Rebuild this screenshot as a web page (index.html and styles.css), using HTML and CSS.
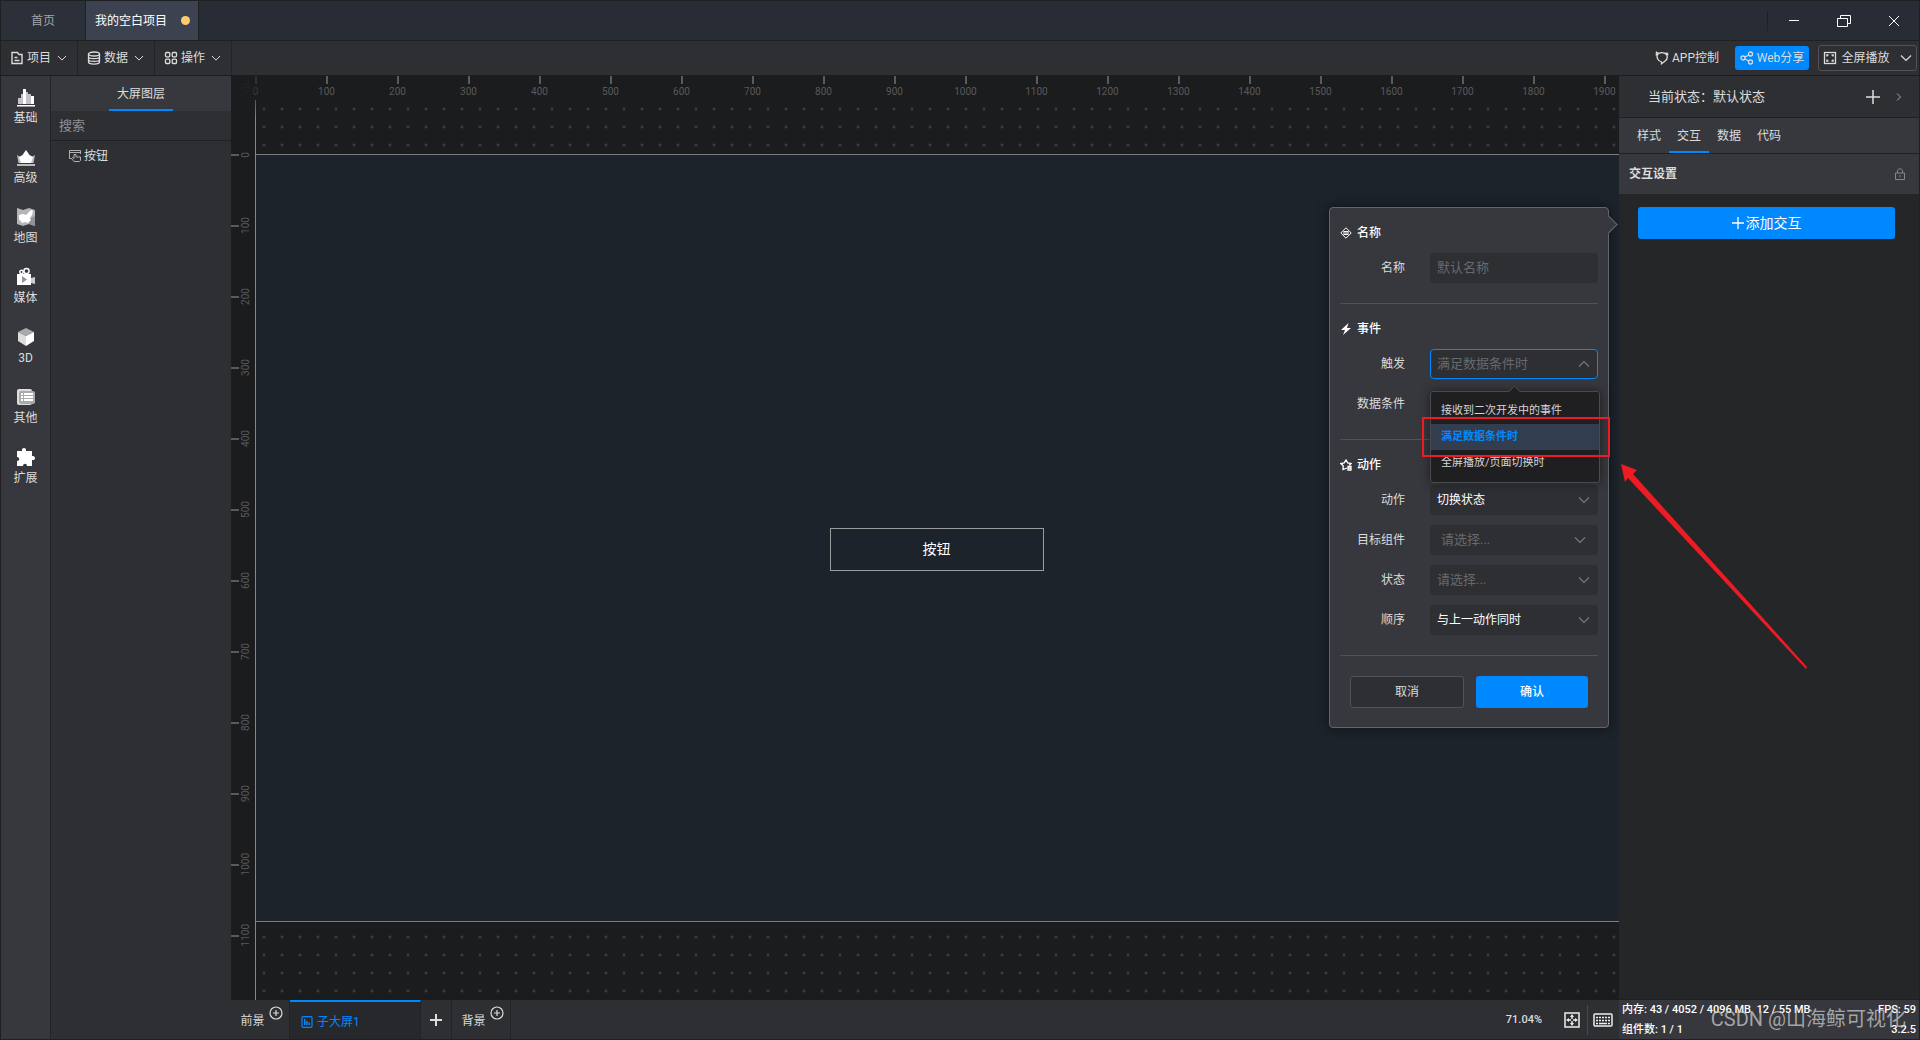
FILE: index.html
```html
<!DOCTYPE html>
<html lang="zh-CN">
<head>
<meta charset="utf-8">
<title>我的空白项目</title>
<link rel="stylesheet" href="styles.css">
</head>
<body>
<svg class="defs" aria-hidden="true">
  <symbol id="down" viewBox="0 0 12 8"><path d="M1 1.500 6 6.500 11 1.500" fill="none" stroke="currentColor" stroke-width="1.200"/></symbol>
  <symbol id="up" viewBox="0 0 12 8"><path d="M1 6.500 6 1.500 11 6.500" fill="none" stroke="currentColor" stroke-width="1.200"/></symbol>
  <symbol id="circle-plus" viewBox="0 0 14 14"><circle cx="7" cy="7" r="6" fill="none" stroke="currentColor" stroke-width="1.200"/><path d="M7 4v6M4 7h6" stroke="currentColor" stroke-width="1.200"/></symbol>
</svg>
<div class="app">
  <header class="titlebar">
    <nav class="project-tabs">
      <a class="project-tab" href="#home">首页</a>
      <a class="project-tab project-tab--active" href="#project">我的空白项目<span class="unsaved"></span></a>
    </nav>
    <div class="window-controls">
      <button aria-label="最小化"><svg width="14" height="14" viewBox="0 0 14 14"><path d="M2 6.500h10" stroke="#fff"/></svg></button>
      <button aria-label="还原"><svg width="16" height="14" viewBox="0 0 16 14" fill="none" stroke="#fff"><path d="M1.500 4.500h10v8h-10zM4.500 4.500v-3h10v8h-3"/></svg></button>
      <button aria-label="关闭"><svg width="12" height="12" viewBox="0 0 12 12"><path d="m1 1 10 10M11 1 1 11" stroke="#fff"/></svg></button>
    </div>
  </header>

  <div class="menubar">
    <nav class="menus">
      <button class="menu"><svg width="14" height="14" viewBox="0 0 14 14" fill="none" stroke="currentColor" stroke-width="1.400"><path d="M2 1.500h5.500l1.500 2h3v9H2zM4.500 6.500h3M4.500 9.500h5"/></svg>项目<svg class="menu-arrow" width="10" height="8"><use href="#down"/></svg></button>
      <button class="menu"><svg width="14" height="14" viewBox="0 0 14 14" fill="none" stroke="currentColor" stroke-width="1.300"><ellipse cx="7" cy="3" rx="5.500" ry="2"/><path d="M1.500 3v8c0 2.700 11 2.700 11 0V3M1.500 5.700c0 2.500 11 2.500 11 0M1.500 8.400c0 2.500 11 2.500 11 0"/></svg>数据<svg class="menu-arrow" width="10" height="8"><use href="#down"/></svg></button>
      <button class="menu"><svg width="14" height="14" viewBox="0 0 14 14" fill="none" stroke="currentColor" stroke-width="1.300"><rect x="1.500" y="1.500" width="4.300" height="4.300" rx="1"/><rect x="8.200" y="1.500" width="4.300" height="4.300" rx="1"/><rect x="1.500" y="8.200" width="4.300" height="4.300" rx="1"/><rect x="8.200" y="8.200" width="4.300" height="4.300" rx="1"/></svg>操作<svg class="menu-arrow" width="10" height="8"><use href="#down"/></svg></button>
    </nav>
    <div class="actions">
      <button class="app-control"><svg width="14" height="14" viewBox="0 0 14 14" fill="none" stroke="currentColor" stroke-width="1.300"><path d="M2.500 3.500C4.500 1 9 .8 11.500 3.500c1.500 3 .5 5.500-2 7L6.500 12.800V11C3 10 1.200 6.500 2.500 3.500zM4 2.500 1.500 1.300 1.200 4.500M10.500 2.200l2 .2.300 2"/></svg>APP控制</button>
      <button class="web-share"><svg width="14" height="14" viewBox="0 0 14 14" fill="none" stroke="currentColor" stroke-width="1.300"><circle cx="3" cy="7" r="2"/><circle cx="10.500" cy="3" r="2"/><circle cx="10.500" cy="11" r="2"/><path d="m5 6 3.700-2M5 8l3.700 2"/></svg>Web分享</button>
      <button class="fullscreen"><svg width="14" height="14" viewBox="0 0 14 14" fill="none" stroke="currentColor"><rect x="1.500" y="1.500" width="11" height="11" stroke-width="1.300"/><path d="M4 5.500V4h1.500M8.500 4H10v1.500M10 8.500V10H8.500M5.500 10H4V8.500" stroke-width="1.500"/></svg>全屏播放<svg class="fullscreen-arrow" width="12" height="8"><use href="#down"/></svg></button>
    </div>
  </div>

  <main class="workspace">
    <nav class="rail">
      <a class="rail-item" href="#basic"><svg width="20" height="20" viewBox="0 0 20 20" fill="#fff"><path d="M1 18h18v1.500H1zM7 2h3v15H7zM15 9h3v8h-3z"/><path fill="#c4c4c6" d="M2 11h3v6H2zM5 7h2v10H5zM10 5h2v12h-2zM12 7h3v10h-3z"/></svg>基础</a>
      <a class="rail-item" href="#advanced"><svg width="20" height="20" viewBox="0 0 20 20"><path fill="#bbb" d="M1 8l5 3 8 0 5-3-1.500 8h-15zM1 17h18v2H1z"/><path fill="#fff" d="m10 3 3.500 5L17 10l-2 6H5L3 10l3.500-2z"/></svg>高级</a>
      <a class="rail-item" href="#map"><svg width="20" height="20" viewBox="0 0 20 20"><path fill="#b5b5b7" d="m1 1 6 2 6-2 6 2v16l-6-2-6 2-6-2z"/><path fill="#939396" d="m13 12 6-3v10l-6-2z"/><path fill="#fff" d="M3 8l4-1 3 1 5-5 2 1-1 4-2 3 1 2-3 3-3-1-3 1-3-4z"/></svg>地图</a>
      <a class="rail-item" href="#media"><svg width="20" height="20" viewBox="0 0 20 20"><g fill="none" stroke="#fff" stroke-width="1.500"><circle cx="5.500" cy="5" r="1.700"/><circle cx="10.500" cy="4" r="2.600"/></g><path fill="#fff" d="M1 7h14v11H1z"/><path fill="#ccc" d="m15 11 4-1v7l-4-1z"/><path fill="#949496" d="m6 9 5 3.500L6 16z"/></svg>媒体</a>
      <a class="rail-item" href="#3d"><svg width="20" height="20" viewBox="0 0 20 20"><path fill="#aaaaac" d="m10 1 8 4-8 4-8-4z"/><path fill="#ddd" d="m2 5 8 4v10l-8-5z"/><path fill="#fff" d="m18 5-8 4v10l8-5z"/></svg>3D</a>
      <a class="rail-item" href="#other"><svg width="20" height="20" viewBox="0 0 20 20"><rect x="1" y="2" width="15" height="16" rx="2" fill="#ddd"/><rect x="3" y="4" width="16" height="13" rx="2" fill="#aaa"/><path fill="#fff" d="M5 6h2v2H5zM8 6h9v2H8zM5 9h2v2H5zM8 9h9v2H8zM5 12h2v2H5zM8 12h9v2H8z"/></svg>其他</a>
      <a class="rail-item" href="#extend"><svg width="20" height="20" viewBox="0 0 20 20"><path fill="#fff" d="M1 4h5c-1-4 5-4 4 0h6v5c4-1 4 5 0 4v6h-5c0-3-4-3-4 0H1v-5c3 0 3-4 0-4z"/></svg>扩展</a>
    </nav>

    <aside class="layers">
      <div class="layers-head"><h2 class="layers-title">大屏图层</h2></div>
      <input class="layers-search" type="search" placeholder="搜索" aria-label="搜索">
      <ul class="layers-list">
        <li><svg width="14" height="14" viewBox="0 0 14 14" fill="none" stroke="#b0b1b3"><path d="M3.500 9.500h-2v-8h11v3.500M1.500 3.500h11M6 9.500V5.500h2V8h4.500v3.500l-1 1H6L3.500 9.500l1-1L6 9.500"/></svg>按钮</li>
      </ul>
    </aside>

    <section class="center">
      <div class="canvas">
        <div class="ruler-x"><span>0</span><span>100</span><span>200</span><span>300</span><span>400</span><span>500</span><span>600</span><span>700</span><span>800</span><span>900</span><span>1000</span><span>1100</span><span>1200</span><span>1300</span><span>1400</span><span>1500</span><span>1600</span><span>1700</span><span>1800</span><span>1900</span></div>
        <div class="ruler-y"><span><b>-100</b></span><span><b>0</b></span><span><b>100</b></span><span><b>200</b></span><span><b>300</b></span><span><b>400</b></span><span><b>500</b></span><span><b>600</b></span><span><b>700</b></span><span><b>800</b></span><span><b>900</b></span><span><b>1000</b></span><span><b>1100</b></span></div>
        <div class="stage">
          <div class="artboard"><button class="widget">按钮</button></div>
        </div>
        <div class="corner"></div>
      </div>
      <footer class="pages">
        <button class="page">前景<svg class="page-add" width="14" height="14"><use href="#circle-plus"/></svg></button>
        <button class="page page--active"><svg width="12" height="12" viewBox="0 0 12 12"><rect x="1" y=".7" width="10" height="10.600" rx="1" fill="none" stroke="currentColor" stroke-width="1.200"/><path d="M3 3h1.500v6H3zM5.200 5h1.500v4H5.200zM7.500 6.500H9V9H7.500z" fill="currentColor"/></svg>子大屏1</button>
        <button class="page page--new" aria-label="新增"><svg width="12" height="12" viewBox="0 0 12 12"><path d="M6 0v12M0 6h12" stroke="#ddd" stroke-width="2"/></svg></button>
        <button class="page">背景<svg class="page-add" width="14" height="14"><use href="#circle-plus"/></svg></button>
        <div class="zoom">
          <span class="zoom-value">71.04%</span>
          <button aria-label="适应窗口"><svg width="16" height="16" viewBox="0 0 16 16"><rect x="1" y="1" width="14" height="14" fill="none" stroke="#eee" stroke-width="1.500"/><path fill="#eee" d="m8 2 2 3H8.700v2H7.300V5H6zM8 14l2-3H8.700V9H7.300v2H6zM2 8l3-2v1.300h2v1.400H5V10zM14 8l-3-2v1.300H9v1.400h2V10z"/></svg></button>
          <button class="keyboard" aria-label="快捷键"><svg width="20" height="14" viewBox="0 0 20 14"><rect x="1" y="1" width="18" height="12" rx="1" fill="none" stroke="#eee" stroke-width="1.500"/><path d="M3 4.500h14M3 7.500h14" stroke="#eee" stroke-width="1.600" stroke-dasharray="2 1"/><path d="M3 10.500h2M6 10.500h8M15 10.500h2" stroke="#eee" stroke-width="1.600"/></svg></button>
        </div>
      </footer>

      <form class="dialog">
        <fieldset class="group">
          <legend class="group-title"><svg width="12" height="12" viewBox="0 0 12 12" fill="none" stroke="currentColor"><path d="m6 .8 5.200 5.200L6 11.200.8 6zM3.500 4.500h5M3 6h6M3.500 7.500h5"/></svg>名称</legend>
          <div class="field"><label for="name">名称</label><div class="control"><input id="name" type="text" placeholder="默认名称"></div></div>
        </fieldset>
        <fieldset class="group">
          <legend class="group-title"><svg width="12" height="12" viewBox="0 0 12 12" fill="currentColor"><path d="M8.500 0 1 7h4L3 12l8-7H7z"/></svg>事件</legend>
          <div class="field"><label for="trigger">触发</label><div class="control control--open"><select id="trigger" class="muted"><option>满足数据条件时</option></select><svg class="caret" width="12" height="8"><use href="#up"/></svg>
            <ul class="options">
              <li>接收到二次开发中的事件</li>
              <li class="option--selected">满足数据条件时</li>
              <li>全屏播放/页面切换时</li>
            </ul></div></div>
          <div class="field"><span class="field-name">数据条件</span></div>
        </fieldset>
        <fieldset class="group">
          <legend class="group-title"><svg width="12" height="12" viewBox="0 0 12 12" fill="none" stroke="currentColor" stroke-width="1.300"><path d="M7 9 3 10.500l.2-3.700L.8 4.500l3.400-.7L6 1l1.700 2.800 3.500.7-2 2"/><path d="M8 7.500h3v3.500H8zM8 9.200h3"/></svg>动作</legend>
          <div class="field"><label for="action">动作</label><div class="control"><select id="action"><option>切换状态</option></select><svg class="caret" width="12" height="8"><use href="#down"/></svg></div></div>
          <div class="field"><label for="target">目标组件</label><div class="control control--inset"><select id="target" class="muted"><option>请选择...</option></select><svg class="caret" width="12" height="8"><use href="#down"/></svg></div></div>
          <div class="field"><label for="state">状态</label><div class="control"><select id="state" class="muted"><option>请选择...</option></select><svg class="caret" width="12" height="8"><use href="#down"/></svg></div></div>
          <div class="field"><label for="order">顺序</label><div class="control"><select id="order"><option>与上一动作同时</option></select><svg class="caret" width="12" height="8"><use href="#down"/></svg></div></div>
        </fieldset>
        <div class="dialog-actions"><button type="button" class="cancel">取消</button><button type="button" class="confirm">确认</button></div>
      </form>
    </section>

    <aside class="inspector">
      <div class="state-bar"><span>当前状态：默认状态</span>
        <button aria-label="添加状态"><svg width="14" height="14" viewBox="0 0 14 14"><path d="M7 0v14M0 7h14" stroke="#ddd" stroke-width="1.500"/></svg></button>
        <button aria-label="展开"><svg width="6" height="8" viewBox="0 0 6 8"><path d="m1 .5 3.500 3.500L1 7.500" fill="none" stroke="#aaa"/></svg></button>
      </div>
      <nav class="tabs"><a href="#style">样式</a><a class="tab--active" href="#interact">交互</a><a href="#data">数据</a><a href="#code">代码</a></nav>
      <div class="section-head"><h2>交互设置</h2><svg width="12" height="12" viewBox="0 0 12 12" fill="none" stroke="#858588"><path d="M1.500 5h9v6.500h-9zM3.500 5V3c0-3 5-3 5 0v2M6 7.200v2"/></svg></div>
      <div class="inspector-body"><button class="add"><svg width="12" height="12" viewBox="0 0 12 12"><path d="M6 0v12M0 6h12" stroke="#fff" stroke-width="1.300"/></svg>添加交互</button></div>
      <footer class="stats">
        <p><span>内存: 43 / 4052 / 4096 MB&nbsp; 12 / 55 MB</span><span>FPS: 59</span></p>
        <p><span>组件数: 1 / 1</span><span>3.2.5</span></p>
        <span class="watermark">CSDN @山海鲸可视化</span>
      </footer>
    </aside>

    <svg class="annotation" width="392" height="256" viewBox="0 0 392 256" aria-hidden="true">
      <rect x="5" y="2" width="186" height="38" fill="none" stroke="#ed1c24" stroke-width="2"/>
      <path fill="#ed1c24" d="m203 48 16 6-4 4 174 193-1 2L210 62l-3 4z"/>
    </svg>
  </main>
</div>
</body>
</html>
```
FILE: styles.css
```css
* { box-sizing: border-box; }
body { margin: 0; background: #1f2022; color: #dcdcdc; font: 12px/16px Roboto, "Noto Sans CJK SC", sans-serif; }
button { display: flex; align-items: center; justify-content: center; margin: 0; padding: 0; border: 0; background: none; color: inherit; font: inherit; white-space: nowrap; }
input, select { font: inherit; color: inherit; }
a { color: inherit; text-decoration: none; }
h2, p, ul { margin: 0; padding: 0; font-size: 12px; font-weight: 400; list-style: none; }
svg { flex: none; }
.defs { position: absolute; width: 0; height: 0; }
.app { display: flex; flex-direction: column; height: 100vh; padding: 1px; }

/* title bar */
.titlebar { display: flex; justify-content: space-between; height: 40px; background: #282c34; border-bottom: 1px solid #1f2022; }
.project-tabs { display: flex; }
.project-tab { display: flex; align-items: center; justify-content: center; width: 85px; background: #2c3038; color: #a2a4a8; border-right: 1px solid #1f2022; }
.project-tab--active { width: 113px; justify-content: flex-start; gap: 14px; padding-left: 9px; background: #3d4250; color: #fff; }
.unsaved { width: 9px; height: 9px; border-radius: 50%; background: #ffcb6b; }
.window-controls { display: flex; align-self: center; height: 20px; border-left: 1px solid #1f2022; }
.window-controls button { width: 50px; }
.window-controls button:first-child { margin-left: 1px; }

/* menu bar */
.menubar { display: flex; justify-content: space-between; height: 35px; background: #2e2f33; border-bottom: 1px solid #1c1d1f; }
.menus { display: flex; }
.menu { gap: 3px; width: 77px; padding-right: 1px; border-right: 1px solid #222326; }
.menu-arrow { margin-left: 3px; }
.actions { display: flex; align-items: center; padding-right: 2px; }
.app-control { gap: 3px; margin-right: 16px; }
.web-share { gap: 3px; width: 74px; height: 24px; margin-right: 9px; border-radius: 3px; background: #0089ff; }
.fullscreen { gap: 4px; width: 99px; height: 26px; border: 1px solid #515256; border-radius: 3px; }
.fullscreen-arrow { margin-left: 6px; }

/* left panels */
.workspace { position: relative; display: flex; flex: 1; min-height: 0; }
.rail { width: 50px; background: #37383d; border-right: 1px solid #222326; }
.rail-item { display: flex; flex-direction: column; align-items: center; gap: 3px; height: 60px; padding-top: 11px; }
.layers { width: 180px; background: #2e2f33; }
.layers-head { display: flex; justify-content: center; height: 35px; background: #37383d; }
.layers-title { width: 64px; padding-top: 10px; text-align: center; border-bottom: 2px solid #0089ff; }
.layers-search { display: block; width: 100%; height: 30px; padding: 0 8px; border: 0; border-bottom: 1px solid #1f2022; background: none; font-size: 13px; }
.layers-search::placeholder { color: #8e8f92; }
.layers-list li { display: flex; align-items: center; gap: 2px; height: 30px; padding-left: 17px; }

/* canvas */
.center { position: relative; display: flex; flex: 1; flex-direction: column; min-width: 0; }
.canvas { position: relative; display: grid; flex: 1; grid-template: 24px 1fr / 24px 1fr; min-height: 0; overflow: hidden; background: #1b1c1e; color: #595a5c; font-size: 10px; }
.ruler-x { grid-area: 1 / 1 / 2 / 3; display: flex; overflow: hidden; }
.ruler-x span { display: flex; flex: 0 0 71px; flex-direction: column; align-items: center; line-height: 16px; }
.ruler-x span:first-child { margin-left: -11px; }
.ruler-x span::before { content: ""; width: 2px; height: 8px; background: #5a5b5d; }
.ruler-y { grid-area: 1 / 1 / 3 / 2; display: flex; flex-direction: column; overflow: hidden; }
.ruler-y span { display: flex; flex: 0 0 71px; align-items: center; }
.ruler-y span:first-child { margin-top: -28px; }
.ruler-y span::before { content: ""; width: 8px; height: 2px; background: #5a5b5d; }
.ruler-y b { font-weight: 400; line-height: 14px; writing-mode: vertical-rl; transform: rotate(180deg); }
.stage { display: flex; grid-area: 2 / 2; padding: 54px 0 78px; border-left: 1px solid #85868a; background: radial-gradient(circle, #3a3b3d 1px, transparent 2px) -1px 0 / 18px 18px; }
.artboard { display: flex; flex: 1; align-items: center; justify-content: center; padding: 22px 2px 0 0; border: solid #7b7d7e; border-width: 1px 0; background: #1c232a; }
.widget { width: 214px; height: 43px; border: 1px solid #9a9c9e; color: #fff; font-size: 14px; }
.corner { position: absolute; top: 0; left: 0; width: 50px; height: 50px; background: radial-gradient(circle at 0 0, #1b1c1e 20%, transparent 70%); }

/* page bar */
.pages { display: flex; height: 39px; background: #2e2f33; }
.page { width: 59px; padding-top: 3px; border-right: 1px solid #222326; }
.page-add { margin: -16px 0 0 4px; }
.page:first-child, .page--new + .page { padding-left: 3px; }
.page--active { gap: 4px; justify-content: flex-start; width: 131px; padding-left: 11px; border-top: 2px solid #0089ff; background: #27282b; color: #0089ff; }
.page--new { width: 31px; padding: 0; }
.zoom { display: flex; align-items: center; margin-left: auto; padding-right: 6px; }
.zoom-value { margin-right: 22px; font-size: 11px; font-weight: 500; }
.keyboard { height: 30px; margin-left: 7px; padding-left: 5px; border-left: 1px solid #48494d; }

/* interaction dialog */
.dialog { position: absolute; top: 131px; right: 10px; width: 280px; padding: 0 10px; border: 1px solid #63656a; border-radius: 4px; background: #37383d; box-shadow: 0 0 12px rgba(0, 0, 0, .5); }
.dialog::after { content: ""; position: absolute; top: 10px; right: -7px; width: 12px; height: 12px; background: #37383d; border: solid #63656a; border-width: 1px 1px 0 0; transform: rotate(45deg); }
.group { display: flex; flex-direction: column; gap: 10px; min-width: 0; margin: 0; padding: 0 0 20px; border: 0; border-bottom: 1px solid #505156; }
.group-title { display: flex; align-items: center; gap: 5px; height: 45px; padding: 4px 0 0; color: #fff; font-weight: 500; }
.field { display: flex; align-items: center; height: 30px; }
.field label, .field-name { width: 65px; margin-right: 25px; text-align: right; }
.control { position: relative; display: flex; flex: 1; height: 30px; border: 1px solid transparent; border-radius: 4px; background: #2e2f33; color: #fff; }
.control input, .control select { width: 100%; padding: 0 6px; border: 0; background: none; appearance: none; }
.control input { font-size: 13px; }
.control input::placeholder { color: #68696c; }
.control .muted { color: #68696c; font-size: 13px; }
.control--open { border-color: #0089ff; }
.control--inset { padding: 0 4px; }
.caret { align-self: center; margin-right: 7px; color: #77787b; pointer-events: none; }
.options { position: absolute; top: 41px; left: -1px; z-index: 1; width: 170px; padding: 6px 0; border: 1px solid #4a4b4e; border-radius: 3px; background: #1f1f21; color: #d5d5d5; box-shadow: 0 0 10px rgba(0, 0, 0, .5); }
.options::before { content: ""; position: absolute; top: -5px; left: 79px; width: 8px; height: 8px; border: solid #4a4b4e; border-width: 1px 0 0 1px; background: #1f1f21; transform: rotate(45deg); }
.options li { padding-left: 10px; font-size: 11px; line-height: 26px; }
.options .option--selected { background: #323d50; color: #0089ff; font-weight: 700; }
.dialog-actions { display: flex; gap: 12px; padding: 20px 10px 19px; }
.dialog-actions button { flex: 1; height: 32px; border-radius: 3px; }
.cancel { border: 1px solid #515256; background: #2e2f33; }
.confirm { background: #0089ff; color: #fff; font-weight: 500; }

/* inspector */
.inspector { display: flex; flex-direction: column; width: 300px; background: #252628; }
.state-bar { display: flex; align-items: center; gap: 16px; height: 42px; padding: 0 17px 0 29px; border-bottom: 1px solid #1f2022; background: #2e2f33; font-size: 13px; }
.state-bar span { flex: 1; }
.tabs { display: flex; height: 36px; padding-left: 10px; border-bottom: 1px solid #1f2022; background: #37383d; }
.tabs a { width: 40px; line-height: 36px; text-align: center; }
.tabs .tab--active { border-bottom: 2px solid #0089ff; }
.section-head { display: flex; align-items: center; justify-content: space-between; height: 40px; padding: 0 13px 0 10px; background: #37383d; }
.section-head h2 { font-weight: 700; }
.inspector-body { flex: 1; padding: 13px 24px 0 19px; }
.add { gap: 2px; width: 100%; height: 32px; border-radius: 3px; background: #0089ff; color: #fff; font-size: 14px; }
.stats { position: relative; height: 40px; padding: 0 3px; border-top: 1px solid #1f2022; background: #37383d; color: #fff; }
.stats p { display: flex; justify-content: space-between; font-size: 11px; font-weight: 500; line-height: 20px; }
.watermark { position: absolute; top: 5px; right: 13px; color: rgba(200, 200, 200, .75); font: 20px/28px Roboto, "Noto Sans CJK SC", sans-serif; white-space: nowrap; }

/* callout over the dialog */
.annotation { position: absolute; top: 340px; right: 109px; z-index: 2; pointer-events: none; }
```
